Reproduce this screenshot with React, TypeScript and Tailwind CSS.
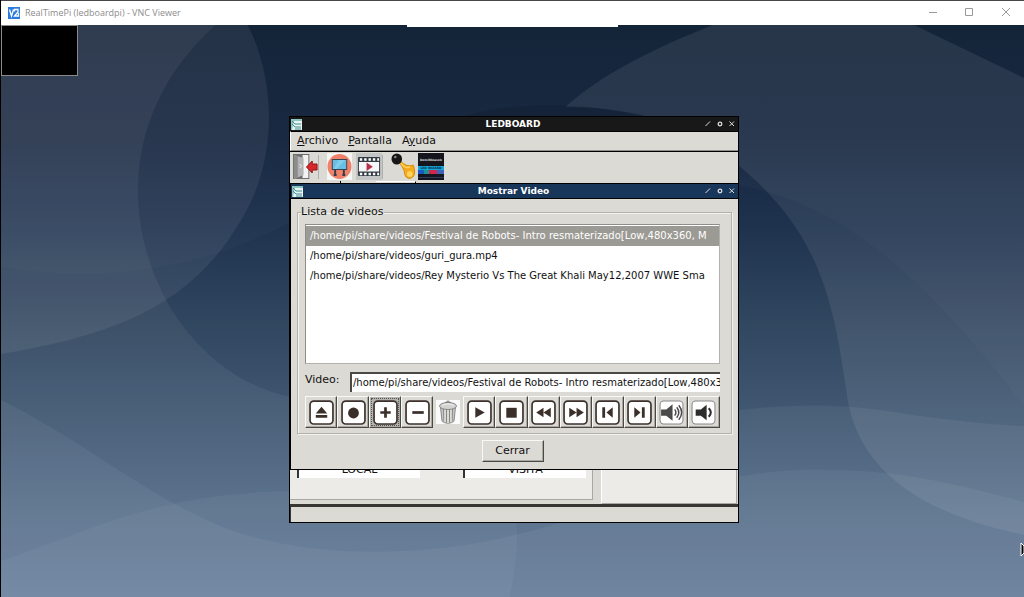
import { useState } from "react";
import type { ReactNode } from "react";

const VIDEOS = [
  "/home/pi/share/videos/Festival de Robots- Intro resmaterizado[Low,480x360, M",
  "/home/pi/share/videos/guri_gura.mp4",
  "/home/pi/share/videos/Rey Mysterio Vs The Great Khali May12,2007 WWE Sma",
];

const Wallpaper = () => (
  <svg
    className="absolute inset-0 w-full h-full"
    viewBox="0 25 1024 572"
    preserveAspectRatio="none"
    aria-hidden="true"
  >
    <defs>
      <linearGradient id="sky" x1="0" y1="0" x2="0" y2="1">
        <stop offset="0" stopColor="#102035" />
        <stop offset="0.2" stopColor="#15253f" />
        <stop offset="0.35" stopColor="#1e324e" />
        <stop offset="0.52" stopColor="#31465f" />
        <stop offset="0.7" stopColor="#435a75" />
        <stop offset="0.85" stopColor="#546c88" />
        <stop offset="1" stopColor="#607896" />
      </linearGradient>
    </defs>
    <rect y="25" width="1024" height="572" fill="url(#sky)" />
    <g fill="#fff">
      <path
        fillOpacity="0.065"
        d="M0 25H247C275 80 279 163 236 227C187 307 110 336 0 354Z"
      />
      <path
        fillOpacity="0.055"
        d="M0 25H215C130 100 115 210 168 305C195 350 235 385 290 397C420 420 640 415 738 410C800 403 850 404 900 413C950 420 980 424 1024 426V597H0Z"
      />
      <path
        fillOpacity="0.02"
        d="M0 25V267C110 285 210 265 290 222C420 140 600 150 738 185C850 205 935 290 1024 406V25Z"
      />
      <path
        fillOpacity="0.08"
        d="M565 107C640 107 690 125 738 165C815 230 832 290 846 390C854 460 905 510 1024 535V78L914 25H712C650 50 600 75 565 107Z"
      />
      <path
        fillOpacity="0.05"
        d="M0 400C90 445 150 500 230 530C320 562 440 555 522 533C650 500 740 465 830 470C900 470 960 485 1024 502V597H0Z"
      />
      <path
        fillOpacity="0.045"
        d="M0 561C80 535 150 493 290 491C420 495 510 500 516 524C518 550 514 575 509 597H0Z"
      />
    </g>
    <path
      fill="#000"
      fillOpacity="0.1"
      d="M430 130C480 98 640 85 738 165V190H430Z"
    />
  </svg>
);

const AppIcon = () => (
  <svg className="w-[11px] h-[11px]" viewBox="0 0 11 11" aria-hidden="true">
    <rect width="11" height="11" fill="#e9f3ef" />
    <path d="M0 0H11V2H3L1 11H0Z" fill="#8cc4c0" />
    <path
      d="M1 2L4 5H10M1 5L4 8H10M4 10H10"
      stroke="#3d8d94"
      fill="none"
    />
  </svg>
);

type TitleBarProps = { title: string; className: string };

const TitleBar = ({ title, className }: TitleBarProps) => (
  <header className={`flex h-3.5 items-center justify-between px-px ${className}`}>
    <AppIcon />
    <h2 className="flex-1 pl-5 text-center text-[9px] leading-3 font-bold text-white">
      {title}
    </h2>
    <div className="flex gap-1 pr-px">
      <button aria-label="Minimizar" className="w-2 h-2">
        <svg viewBox="0 0 8 8" stroke="#ddd" fill="none">
          <path d="M1.500 6L6 1.500" />
        </svg>
      </button>
      <button aria-label="Maximizar" className="w-2 h-2">
        <svg viewBox="0 0 8 8" stroke="#ddd" fill="none">
          <circle cx="4" cy="4" r="1.8" strokeWidth="1.3" />
        </svg>
      </button>
      <button aria-label="Cerrar ventana" className="w-2 h-2">
        <svg viewBox="0 0 8 8" stroke="#ddd" fill="none">
          <path d="M1.500 1.500L6 6M6 1.500L1.500 6" />
        </svg>
      </button>
    </div>
  </header>
);

const ExitIcon = () => (
  <svg className="w-[26px] h-[27px]" viewBox="0 0 27 27" preserveAspectRatio="none">
    <path d="M1 1H18V26H1Z" fill="#6e6e6e" />
    <path d="M11 2H17V25H11Z" fill="#f2f2f2" />
    <path d="M2 2L12 5V22L2 26Z" fill="#b3b3b3" />
    <path d="M2 2L6 3V25L2 26Z" fill="#8c8c8c" />
    <path d="M8 11L10 13L8 15" stroke="#eee" fill="none" />
    <path d="M15 14L21 8V11H26V17H21V20Z" fill="#d8272b" stroke="#8d1417" />
  </svg>
);

const BoardIcon = () => (
  <svg className="w-[25px] h-[27px]" viewBox="0 0 26 27" preserveAspectRatio="none">
    <rect width="26" height="27" fill="#f5f5f3" />
    <circle cx="13" cy="13.500" r="12.500" fill="#f0826c" />
    <path d="M8.500 17V22M17.500 17V22M7 22H10M16 22H19" stroke="#333c48" strokeWidth="2" />
    <rect x="5.500" y="6.500" width="15" height="10" fill="#68bfe3" stroke="#36444f" strokeWidth="1" />
    <path d="M12 7H19L10 16H7Z" fill="#82cdeb" />
  </svg>
);

const FilmIcon = () => (
  <svg className="w-[26px] h-[27px]" viewBox="0 0 27 27" preserveAspectRatio="none">
    <rect width="27" height="27" fill="#c3c5c6" />
    <rect x="2" y="4" width="23" height="19" rx="1" fill="#333b42" />
    <rect x="3" y="9" width="21" height="9.500" fill="#f7f7f7" />
    <path d="M4 6.500H24M4 21H24" stroke="#fff" strokeWidth="2.500" strokeDasharray="2.500 2" />
    <path d="M11 9.500L17.500 13.700L11 18Z" fill="#b7304b" />
  </svg>
);

const HornIcon = () => (
  <svg className="w-[25px] h-[27px]" viewBox="0 0 26 27" preserveAspectRatio="none">
    <path d="M8 8C11 14 14 16 14 20C15 25 18 26 21 25C26 23 25 16 23 12C18 14 14 12 10 8Z" fill="#f5a91d" stroke="#d48b0c" />
    <path d="M10 10C13 14 17 15 20 14" stroke="#ffd05a" fill="none" strokeWidth="1.500" />
    <ellipse cx="19.500" cy="21" rx="3" ry="3" fill="#ffd35a" />
    <circle cx="6" cy="6" r="5.500" fill="#171717" />
    <circle cx="4.500" cy="4" r="1.300" fill="#888" />
  </svg>
);

const LedIcon = () => (
  <svg className="w-[26px] h-[27px]" viewBox="0 0 26 27">
    <rect width="26" height="27" fill="#15151d" />
    <text x="13" y="8" fontSize="3" fontWeight="bold" textAnchor="middle" fill="#ddd">
      DemiWeasok
    </text>
    <rect y="13" width="26" height="4" fill="#13a7d8" />
    <text x="13" y="16" fontSize="3" fontWeight="bold" textAnchor="middle" fill="#0b2a4a">
      LED WIZARD
    </text>
    <rect y="17" width="6" height="4" fill="#1b57c4" />
    <rect x="6" y="17" width="5" height="4" fill="#17958f" />
    <rect x="11" y="17" width="8" height="4" fill="#d2274c" />
    <rect x="19" y="17" width="7" height="4" fill="#3f63b8" />
    <path d="M0 24.500H26" stroke="#2b3b5c" />
  </svg>
);

// Rounded frame shared by the playback glyphs
const Frame = ({ children, thin }: { children: ReactNode; thin?: boolean }) => (
  <svg className="w-[25px] h-[25px]" viewBox="0 0 24 24" fill="#3b2f2a">
    <rect
      x="1"
      y="1"
      width="22"
      height="22"
      rx="3.500"
      fill="#fff"
      stroke={thin ? "#888" : "#3b302c"}
      strokeWidth={thin ? 1 : 1.6}
    />
    {children}
  </svg>
);

const TrashIcon = () => (
  <svg className="w-6 h-6" viewBox="0 0 24 24">
    <rect width="24" height="24" fill="#fafafa" />
    <path d="M4.500 7H19.500L18 21C15 24 9 24 6 21Z" fill="#c6c7c3" stroke="#8b8c88" />
    <path d="M7.500 9L8 21.500M10.500 9V22.500M13.500 9V22.500M16.500 9L16 21.500" stroke="#858682" />
    <path d="M9 9V22M12 9V23M15 9V22" stroke="#eee" />
    <ellipse cx="12" cy="6" rx="8.500" ry="3.500" fill="#d2d3cf" stroke="#888" />
    <path d="M6 5.500C9 3.500 15 3.500 18 5.500" stroke="#f4f4f4" fill="none" />
    <path d="M10 3C10 0.500 14 0.500 14 3" stroke="#666" fill="none" />
  </svg>
);

const CONTROLS = [
  { label: "Expulsar", icon: <Frame><path d="M12 6.500L17.500 13H6.500ZM6.500 14.500H17.500V17H6.500Z" /></Frame> },
  { label: "Grabar", icon: <Frame><circle cx="12" cy="12.500" r="5.200" /></Frame> },
  { label: "Agregar", icon: <Frame><path d="M10.700 7H13.300V10.700H17V13.300H13.300V17H10.700V13.300H7V10.700H10.700Z" /></Frame> },
  { label: "Quitar", icon: <Frame><path d="M7 10.700H18V13.300H7Z" /></Frame> },
  { label: "Vaciar lista", icon: <TrashIcon /> },
  { label: "Reproducir", icon: <Frame><path d="M8 7L17 12L8 17Z" /></Frame> },
  { label: "Detener", icon: <Frame><path d="M7 7.500H17V17H7Z" /></Frame> },
  { label: "Retroceder", icon: <Frame><path d="M12 7.500V16.500L5 12ZM19 7.500V16.500L12 12Z" /></Frame> },
  { label: "Avanzar", icon: <Frame><path d="M6 7.500V16.500L13 12ZM13 7.500V16.500L20 12Z" /></Frame> },
  { label: "Anterior", icon: <Frame><path d="M7 7H9.700V17H7ZM17 7V17L11 12Z" /></Frame> },
  { label: "Siguiente", icon: <Frame><path d="M14.300 7H17V17H14.300ZM7 7V17L13 12Z" /></Frame> },
  {
    label: "Subir volumen",
    icon: (
      <Frame thin>
        <path d="M2 9H7L13 4V20L7 15H2Z" fill="#4a4a4a" />
        <path
          d="M15 9Q17.500 12 15 15M17 7Q21 12 17 17M19 5Q24.500 12 19 19"
          fill="none"
          stroke="#4a4a4a"
          strokeWidth="1.400"
        />
      </Frame>
    ),
  },
  {
    label: "Bajar volumen",
    icon: (
      <Frame thin>
        <path d="M4.500 9H9.500L15 4.500V19.500L9.500 15H4.500Z" fill="#2d2d2d" />
        <path d="M17 8Q21 12 17 16" fill="none" stroke="#2d2d2d" strokeWidth="2" />
      </Frame>
    ),
  },
];

const RAISED =
  "border border-t-[#f8f8f6] border-l-[#f8f8f6] border-r-[#4b4944] border-b-[#4b4944] shadow-[inset_-1px_-1px_0_#a9a8a2]";

const MainWindow = () => (
  <section className="absolute left-[289px] top-[91px] flex h-[407px] w-[450px] flex-col border border-black bg-[#dcdad5]">
    <TitleBar title="LEDBOARD" className="bg-[#181818]" />
    <nav className="flex h-5 items-center gap-2.5 border-t border-b border-l border-t-black border-b-[#8f8d88] border-l-white px-1.5">
      <button><u>A</u>rchivo</button>
      <button><u>P</u>antalla</button>
      <button>A<u>y</u>uda</button>
    </nav>
    <div className="flex h-[30px] items-center border-t border-black pl-0.5">
      <button aria-label="Salir"><ExitIcon /></button>
      <span className="mr-2 h-6 w-px bg-[#b0aea9]" />
      <button aria-label="Tablero"><BoardIcon /></button>
      <button aria-label="Video" className="ml-1"><FilmIcon /></button>
      <span className="mr-2 h-6 w-px bg-[#b0aea9]" />
      <button aria-label="Bocina"><HornIcon /></button>
      <button aria-label="Led" className="ml-0.5"><LedIcon /></button>
    </div>
    <div className="flex h-1 pl-[50px]">
      <span className="w-px bg-black" />
      <span className="ml-[35px] w-10 border-t border-r border-t-white border-r-black" />
    </div>
    <div className="flex flex-1 gap-2 pr-px">
      <div className="mb-1 flex flex-2 items-end gap-[43px] border-r border-b border-[#a9a8a2] bg-[#edebe7] pb-[21px] pl-[7px] pr-1.5">
        <div className="flex h-4 flex-1 items-center justify-center border-l-2 border-[#333] bg-white">
          LOCAL
        </div>
        <div className="flex h-4 flex-1 items-center justify-center border-l-2 border-[#333] bg-white">
          VISITA
        </div>
      </div>
      <div className="w-[136px] border-r border-b border-l border-r-[#a9a8a2] border-b-[#a9a8a2] border-l-white bg-[#edebe7]" />
    </div>
    <footer className="h-[18px] border-t-3 border-l border-[#393733]" />
  </section>
);

const VideoDialog = () => {
  const [selected, setSelected] = useState(0);

  return (
    <section className="absolute left-[290px] top-[158px] flex w-[449px] flex-col border border-black bg-[#dcdad5]">
      <TitleBar title="Mostrar Video" className="bg-[#18365a]" />
      <div className="flex flex-col items-center border-t border-black px-1.5 pb-[7px] pt-[5px]">
        <fieldset className="w-full min-w-0 border border-[#b3b1ab] px-[7px] pb-[5px] shadow-[inset_1px_1px_0_#f3f2ef,1px_1px_0_#f3f2ef]">
          <legend className="-ml-1 leading-4">Lista de videos</legend>
          <ul
            role="listbox"
            aria-label="Lista de videos"
            className="mr-1 mt-1 h-[140px] overflow-hidden border border-t-[#8f8d88] border-l-[#8f8d88] border-r-[#b3b1ab] border-b-[#b3b1ab] bg-white pt-px text-[10px]"
          >
            {VIDEOS.map((video, i) => (
              <li
                key={video}
                role="option"
                aria-selected={i === selected}
                onClick={() => setSelected(i)}
                className={`h-5 overflow-hidden whitespace-nowrap pl-1 leading-5 ${
                  i === selected ? "bg-[#9c9a94] text-white" : ""
                }`}
              >
                {video}
              </li>
            ))}
          </ul>
          <div className="mr-1 mt-2 flex">
            <label htmlFor="video" className="w-[45px] leading-4">
              Video:
            </label>
            <input
              id="video"
              readOnly
              value={VIDEOS[selected]}
              className="h-5 min-w-0 flex-1 border-t-2 border-l-2 border-[#4b4944] bg-white pb-0.5 pl-px text-[10px] outline-none"
            />
          </div>
          <div className="mr-1 mt-1 flex">
            {CONTROLS.map(({ label, icon }) => (
              <button
                key={label}
                aria-label={label}
                className={`flex h-8 min-w-0 flex-1 items-center justify-center ${
                  label === "Vaciar lista" ? "" : RAISED
                } ${label === "Agregar" ? "bg-[#b5b3ae] outline-1 -outline-offset-3 outline-dotted outline-[#555]" : ""}`}
              >
                {icon}
              </button>
            ))}
          </div>
        </fieldset>
        <button className={`mr-1 mt-1.5 h-[22px] w-[62px] ${RAISED}`}>Cerrar</button>
      </div>
    </section>
  );
};

export default function App() {
  return (
    <div className="flex min-h-screen flex-col border-l border-black bg-black font-['DejaVu_Sans',sans-serif] text-[11px] text-[#111]">
      <header className="flex h-[25px] items-center border-t border-[#4a4548] bg-white pl-[7px]">
        <svg className="h-3 w-3" viewBox="0 0 12 12" aria-hidden="true">
          <rect width="12" height="12" fill="#2c7be0" />
          <path
            d="M1.500 2.500L3.500 9L5.500 2.500M6.500 4.500V2.500H10V5L6.500 9H10.500V6"
            fill="none"
            stroke="#fff"
            strokeWidth="1.300"
          />
        </svg>
        <h1 className="flex-1 pl-[5px] font-['Open_Sans',sans-serif] text-[9px] text-[#8c8c8c]">
          RealTimePi (ledboardpi) - VNC Viewer
        </h1>
        <div className="flex gap-6 pr-3 text-[#999]">
          <button aria-label="Minimize" className="h-3 w-3">
            <svg viewBox="0 0 12 12" stroke="currentColor"><path d="M1 5.500H9" /></svg>
          </button>
          <button aria-label="Maximize" className="h-3 w-3">
            <svg viewBox="0 0 12 12" stroke="currentColor" fill="none"><path d="M1.500 1.500H8.500V8.500H1.500Z" /></svg>
          </button>
          <button aria-label="Close" className="h-3 w-3">
            <svg viewBox="0 0 12 12" stroke="currentColor"><path d="M2 1L10 9M10 1L2 9" /></svg>
          </button>
        </div>
      </header>
      <main className="relative -ml-px flex-1 overflow-hidden border-l border-black">
        <Wallpaper />
        <div className="absolute left-0 top-0 h-[51px] w-[77px] border border-[#8b8b88] bg-black" />
        <div className="absolute left-[406px] top-0 h-0.5 w-[211px] bg-white" />
        <div className="absolute -left-px top-0">
          <MainWindow />
          <VideoDialog />
        </div>
        <svg className="absolute right-0 top-[517px] h-4 w-1" viewBox="0 0 4 16" aria-hidden="true">
          <path d="M1 1V14L4 11V4Z" fill="#000" stroke="#fff" />
        </svg>
      </main>
    </div>
  );
}
